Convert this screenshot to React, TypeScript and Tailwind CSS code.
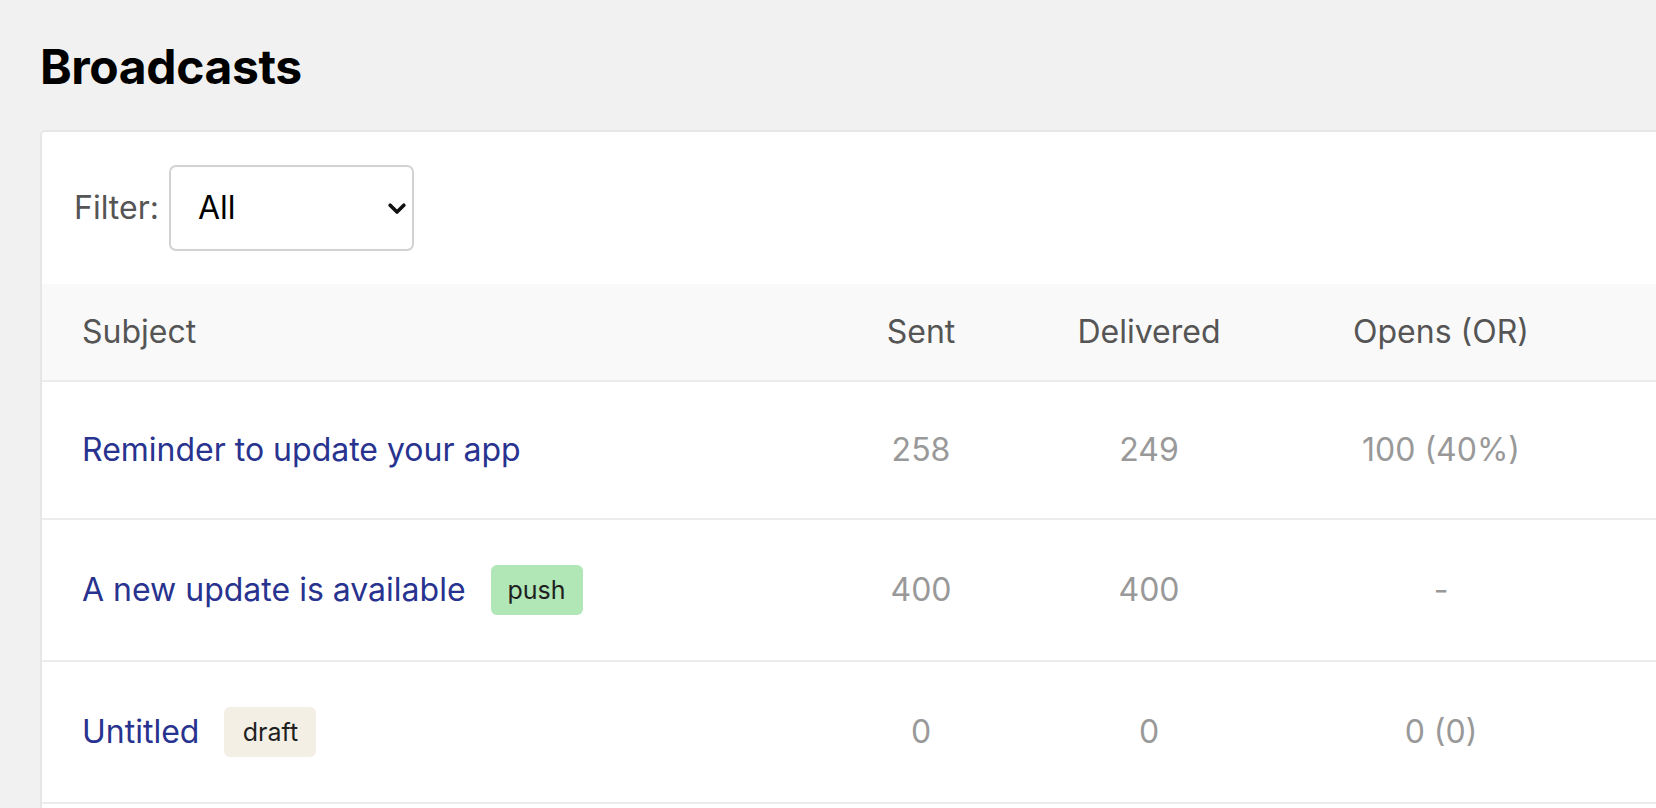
import React from "react";

type Row = {
  subject: string;
  badge?: { label: string; cls: string };
  sent: string;
  delivered: string;
  opens: string;
};

const rows: Row[] = [
  { subject: "Reminder to update your app", sent: "258", delivered: "249", opens: "100 (40%)" },
  {
    subject: "A new update is available",
    badge: { label: "push", cls: "bg-[#b1e6b6]" },
    sent: "400",
    delivered: "400",
    opens: "-",
  },
  {
    subject: "Untitled",
    badge: { label: "draft", cls: "bg-[#f3efe5]" },
    sent: "0",
    delivered: "0",
    opens: "0 (0)",
  },
];

export default function App() {
  return (
    <div className="h-[808px] w-full overflow-hidden bg-[#f1f1f1] font-['Inter','Noto_Sans',sans-serif]">
      <div className="pl-[40px] pt-[38px]">
        <h1 className="text-[48px] font-bold leading-[58px] text-black tracking-[-0.4px]">Broadcasts</h1>
        <div className="mt-[34px] w-[1700px] rounded-[5px] border-2 border-[#e6e6e6] bg-white pb-[40px]">
          <div className="flex items-center gap-[10px] py-[33px] pl-[32px]">
            <span className="text-[32px] leading-[46px] text-[#555555]">Filter:</span>
            <div className="relative">
              <select
                className="h-[86px] w-[245px] appearance-none rounded-[7px] border-2 border-[#d2d2d2] bg-white pl-[27px] text-[32px] text-black outline-none"
                defaultValue="All"
              >
                <option>All</option>
                <option>Sent</option>
                <option>Draft</option>
              </select>
              <svg
                className="pointer-events-none absolute right-[8px] top-[38px]"
                width="18"
                height="12"
                viewBox="0 0 18 12"
                fill="none"
              >
                <path d="M2.2 2.2 L9 9 L15.8 2.2" stroke="#111" strokeWidth="3.6" strokeLinecap="round" strokeLinejoin="round" />
              </svg>
            </div>
          </div>

          <div className="grid grid-cols-[765px_228px_228px_356px_1fr] items-center border-b-2 border-[#ececec] bg-[#f9f9f9] text-[32px] leading-[46px] text-[#555555]">
            <div className="py-[25px] pl-[40px]">Subject</div>
            <div className="text-center">Sent</div>
            <div className="text-center">Delivered</div>
            <div className="text-center">Opens (OR)</div>
            <div />
          </div>

          {rows.map((r) => (
            <div
              key={r.subject}
              className="grid grid-cols-[765px_228px_228px_356px_1fr] items-center border-b-2 border-[#ececec] text-[32px] leading-[46px]"
            >
              <div className="flex items-center gap-[25px] py-[45px] pl-[40px]">
                <a href="#" className="text-[#28338f]">
                  {r.subject}
                </a>
                {r.badge && (
                  <span
                    className={`flex h-[50px] w-[92px] items-center justify-center rounded-[6px] text-[25px] text-[#1f1f1f] ${r.badge.cls}`}
                  >
                    {r.badge.label}
                  </span>
                )}
              </div>
              <div className="text-center text-[#999999]">{r.sent}</div>
              <div className="text-center text-[#999999]">{r.delivered}</div>
              <div className="text-center text-[#999999]">{r.opens}</div>
              <div />
            </div>
          ))}
        </div>
      </div>
    </div>
  );
}
